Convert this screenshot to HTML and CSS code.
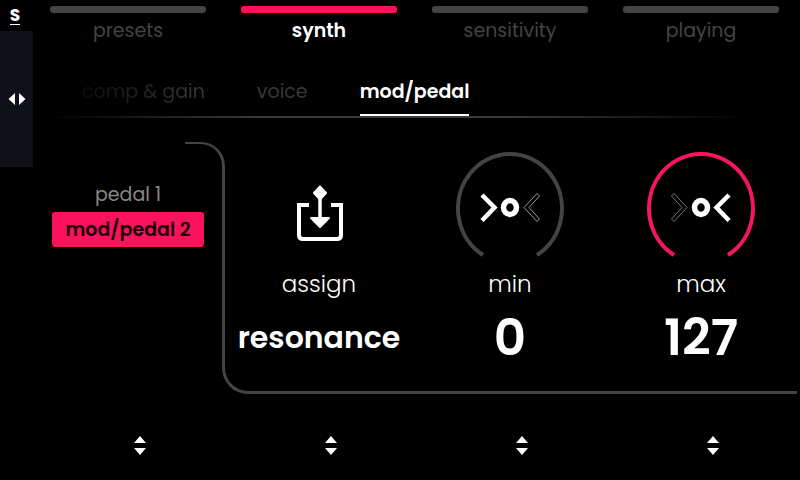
FILE: index.html
```html
<!DOCTYPE html>
<html lang="en">
<head>
  <meta charset="UTF-8">
  <meta name="viewport" content="width=device-width, initial-scale=1.0">
  <title>synth - mod/pedal</title>
  <link rel="stylesheet" href="styles.css">
</head>
<body>

<aside class="rail">
  <a class="logo" href="#home"><span>S</span></a>
  <button class="rail__handle" type="button" aria-label="Switch page">
    <svg width="20" height="14" viewBox="0 0 20 14" fill="#fff">
      <path d="M8 1v12L1.500 7zM12 1v12l6.500-6z"/>
    </svg>
  </button>
</aside>

<main class="screen">
  <nav class="tabs">
    <a class="tab" href="#presets">presets</a>
    <a class="tab tab--active" href="#synth">synth</a>
    <a class="tab" href="#sensitivity">sensitivity</a>
    <a class="tab" href="#playing">playing</a>
  </nav>

  <nav class="subtabs">
    <a class="subtab subtab--fading" href="#comp">comp &amp; gain</a>
    <a class="subtab" href="#voice">voice</a>
    <a class="subtab subtab--active" href="#mod">mod/pedal</a>
  </nav>

  <div class="panel">
    <div class="pedals">
      <button class="pedal" type="button">pedal 1</button>
      <button class="pedal pedal--active" type="button">mod/pedal 2</button>
    </div>

    <section class="params">
      <div class="param">
        <div class="param__icon">
          <svg width="110" height="110" viewBox="0 0 110 110">
            <path d="M56 42v30" stroke="#fff" stroke-width="3.500"/>
            <path d="M56 36.500l6 6.500-6 6.500-6-6.500z" fill="#fff" stroke="#fff" stroke-width="2" stroke-linejoin="round"/>
            <path d="M47 68h18l-9 9z" fill="#fff" stroke="#fff" stroke-width="2" stroke-linejoin="round"/>
            <path d="M45 55H35V85q0 4 4 4h34q4 0 4-4V55H67" fill="none" stroke="#fff" stroke-width="4"/>
          </svg>
        </div>
        <h2 class="param__name">assign</h2>
        <p class="param__value param__value--text">resonance</p>
      </div>

      <div class="param">
        <div class="param__icon">
          <svg width="110" height="110" viewBox="0 0 110 110" fill="none">
            <path d="M28 105A52 54.500 0 1 1 82 105" stroke="#444" stroke-width="4"/>
            <path d="M27 45L39.500 57.500 27 70.500" stroke="#fff" stroke-width="4.500"/>
            <ellipse cx="55" cy="57.500" rx="6.500" ry="7" stroke="#fff" stroke-width="5.500"/>
            <path d="M82 43.500L69 57.500l13 14 2.500-2.500L74 57.500l10.500-11.500z" stroke="#999" stroke-width="1"/>
          </svg>
        </div>
        <h2 class="param__name">min</h2>
        <p class="param__value">0</p>
      </div>

      <div class="param">
        <div class="param__icon">
          <svg width="110" height="110" viewBox="0 0 110 110" fill="none">
            <path d="M28 105A52 54.500 0 1 1 82 105" stroke="#f5175e" stroke-width="4"/>
            <path d="M28 43.500L41 57.500l-13 14-2.500-2.500L36 57.500 25.500 46z" stroke="#777" stroke-width="1"/>
            <ellipse cx="55" cy="57.500" rx="6.500" ry="7" stroke="#fff" stroke-width="5.500"/>
            <path d="M83 45L70.500 57.500 83 70.500" stroke="#fff" stroke-width="4.500"/>
          </svg>
        </div>
        <h2 class="param__name">max</h2>
        <p class="param__value">127</p>
      </div>
    </section>
  </div>

  <footer class="steppers">
    <div class="stepper">
      <button class="step step--up" type="button" aria-label="Pedal up"></button>
      <button class="step step--down" type="button" aria-label="Pedal down"></button>
    </div>
    <div class="stepper">
      <button class="step step--up" type="button" aria-label="Assign up"></button>
      <button class="step step--down" type="button" aria-label="Assign down"></button>
    </div>
    <div class="stepper">
      <button class="step step--up" type="button" aria-label="Min up"></button>
      <button class="step step--down" type="button" aria-label="Min down"></button>
    </div>
    <div class="stepper">
      <button class="step step--up" type="button" aria-label="Max up"></button>
      <button class="step step--down" type="button" aria-label="Max down"></button>
    </div>
  </footer>
</main>

</body>
</html>
```
FILE: styles.css
```css
*,
*::before,
*::after {
  box-sizing: border-box;
}
body {
  margin: 0;
  min-height: 100vh;
  display: grid;
  grid-template-columns: 33px 1fr;
  background: #000;
  color: #fff;
  font-family: Poppins, Inter, sans-serif;
  font-size: 19px;
  font-weight: 400;
}
a {
  color: inherit;
  text-decoration: none;
}
button {
  padding: 0;
  border: none;
  background: none;
  color: inherit;
  font: inherit;
  cursor: pointer;
}
svg {
  display: block;
}

/* left rail */
.logo {
  display: flex;
  justify-content: center;
  height: 31px;
  padding: 8px 3px 0 0;
  font-size: 17px;
  font-weight: 700;
  line-height: 15px;
}
.logo span {
  height: 17px;
  border-bottom: 1px solid #fff;
}
.rail__handle {
  display: flex;
  align-items: center;
  justify-content: center;
  width: 100%;
  height: 136px;
  background: #101018;
}

/* top tabs */
.tabs,
.panel,
.steppers {
  display: grid;
  grid-template-columns: repeat(4, minmax(0, 1fr));
  column-gap: 35px;
  padding: 0 21px 0 17px;
}
.tabs {
  padding-top: 6px;
}
.tab {
  color: #444;
  text-align: center;
  line-height: 26px;
}
.tab::before {
  content: "";
  display: block;
  height: 7px;
  margin-bottom: 5px;
  border-radius: 3px;
  background: #444;
}
.tab--active {
  color: #fff;
  font-weight: 600;
}
.tab--active::before {
  background: #fb125c;
}

/* second row of tabs */
.subtabs {
  display: flex;
  gap: 52px;
  margin: 34px 51px 0 17px;
  padding-left: 32px;
  border-bottom: 2px solid;
  border-image: linear-gradient(to right, #000, #3a3a3a 30%, #3a3a3a 65%, #000) 1;
}
.subtab {
  padding-bottom: 8px;
  border-bottom: 2px solid transparent;
  color: #383838;
  line-height: 28px;
}
.subtab--fading {
  color: transparent;
  background: linear-gradient(to right, #0d0d0d, #383838) text;
}
.subtab--active {
  color: #fff;
  font-weight: 600;
  border-color: #fff;
}

/* pedal list and parameters */
.panel {
  margin-top: 24px;
}
.pedals {
  display: flex;
  flex-direction: column;
  padding: 35px 2px 0;
}
.pedal {
  height: 35px;
  color: #888;
}
.pedal--active {
  border-radius: 3px;
  background: #fb125c;
  color: #200008;
  font-weight: 600;
}
.params {
  position: relative;
  grid-column: 2 / 5;
  display: grid;
  grid-template-columns: repeat(3, minmax(0, 1fr));
  column-gap: 35px;
  padding: 8px 0 26px;
}
.params::before,
.params::after {
  content: "";
  position: absolute;
  border: 3px solid #444;
}
.params::before {
  top: 0;
  bottom: 30px;
  left: -56px;
  width: 40px;
  border-width: 2px 3px 0 0;
  border-top-right-radius: 24px;
}
.params::after {
  top: 40px;
  bottom: 0;
  left: -19px;
  right: -18px;
  border-width: 0 0 3px 3px;
  border-bottom-left-radius: 26px;
}
.param {
  display: flex;
  flex-direction: column;
  align-items: center;
}
.param__name {
  margin: 9px 0 0;
  font-size: 23px;
  font-weight: 300;
  line-height: 30px;
}
.param__value {
  margin: 9px 0 0;
  font-size: 50px;
  font-weight: 600;
  line-height: 60px;
}
.param__value--text {
  font-size: 30px;
}

/* up/down arrows */
.steppers {
  padding: 42px 9px 26px 29px;
}
.stepper {
  display: flex;
  flex-direction: column;
  align-items: center;
  gap: 5px;
}
.step {
  width: 12px;
  height: 7px;
  background: #fff;
}
.step--up {
  clip-path: polygon(50% 0, 100% 100%, 0 100%);
}
.step--down {
  clip-path: polygon(0 0, 100% 0, 50% 100%);
}
```
